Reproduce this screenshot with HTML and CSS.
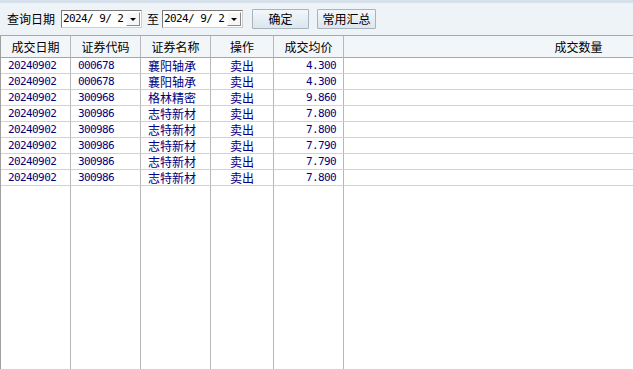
FILE: index.html
```html
<!DOCTYPE html>
<html lang="zh-CN">
<head>
    <meta charset="UTF-8">
    <title>成交查询</title>
    <link rel="stylesheet" href="styles.css">
</head>
<body>
    <div class="toolbar">
        <span class="label">查询日期</span>
        <div class="datebox"><span class="datetext">2024/ 9/ 2</span><span class="drop"></span></div>
        <span class="label to">至</span>
        <div class="datebox"><span class="datetext">2024/ 9/ 2</span><span class="drop"></span></div>
        <button class="btn btn-ok">确定</button>
        <button class="btn btn-sum">常用汇总</button>
    </div>

    <div class="grid">
        <table>
            <colgroup>
                <col class="c-date">
                <col class="c-code">
                <col class="c-name">
                <col class="c-op">
                <col class="c-price">
                <col class="c-qty">
            </colgroup>
            <thead>
                <tr>
                    <th>成交日期</th>
                    <th>证券代码</th>
                    <th>证券名称</th>
                    <th>操作</th>
                    <th>成交均价</th>
                    <th>成交数量</th>
                </tr>
            </thead>
            <tbody>
                <tr><td class="num">20240902</td><td class="num">000678</td><td>襄阳轴承</td><td class="op">卖出</td><td class="num price">4.300</td><td></td></tr>
                <tr><td class="num">20240902</td><td class="num">000678</td><td>襄阳轴承</td><td class="op">卖出</td><td class="num price">4.300</td><td></td></tr>
                <tr><td class="num">20240902</td><td class="num">300968</td><td>格林精密</td><td class="op">卖出</td><td class="num price">9.860</td><td></td></tr>
                <tr><td class="num">20240902</td><td class="num">300986</td><td>志特新材</td><td class="op">卖出</td><td class="num price">7.800</td><td></td></tr>
                <tr><td class="num">20240902</td><td class="num">300986</td><td>志特新材</td><td class="op">卖出</td><td class="num price">7.800</td><td></td></tr>
                <tr><td class="num">20240902</td><td class="num">300986</td><td>志特新材</td><td class="op">卖出</td><td class="num price">7.790</td><td></td></tr>
                <tr><td class="num">20240902</td><td class="num">300986</td><td>志特新材</td><td class="op">卖出</td><td class="num price">7.790</td><td></td></tr>
                <tr><td class="num">20240902</td><td class="num">300986</td><td>志特新材</td><td class="op">卖出</td><td class="num price">7.800</td><td></td></tr>
                <tr class="filler"><td></td><td></td><td></td><td></td><td></td><td></td></tr>
            </tbody>
        </table>
    </div>
</body>
</html>
```

FILE: styles.css
```css
body {
    margin: 0;
    width: 633px;
    height: 369px;
    overflow: hidden;
    background: #ffffff;
    font-family: "Noto Sans CJK SC", sans-serif;
    font-size: 12px;
    color: #000;
}

.toolbar {
    box-sizing: border-box;
    height: 36px;
    display: flex;
    align-items: center;
    padding-left: 7px;
    background: #eef3f8;
    border-top: 3px solid #d7e1eb;
    border-bottom: 1px solid #a7a7a7;
}
.label {
    line-height: 14px;
    margin-right: 6px;
}
.label.to {
    margin-left: 5px;
    margin-right: 3px;
}
.datebox {
    box-sizing: border-box;
    width: 81px;
    height: 18px;
    display: flex;
    align-items: center;
    justify-content: space-between;
    background: #fff;
    border: 1px solid;
    border-color: #7a7a7a #cfcfcf #cfcfcf #7a7a7a;
    padding: 0 1px 0 1px;
}
.datetext {
    font-family: "DejaVu Sans Mono", monospace;
    font-size: 11px;
    letter-spacing: -0.6px;
    line-height: 14px;
}
.drop {
    box-sizing: border-box;
    width: 14px;
    height: 14px;
    background: #f6f6f6;
    border: 1px solid;
    border-color: #ffffff #8a8a8a #8a8a8a #ffffff;
    display: flex;
    align-items: center;
    justify-content: center;
}
.drop::after {
    content: "";
    border-left: 3px solid transparent;
    border-right: 3px solid transparent;
    border-top: 3px solid #000;
    margin-top: 1px;
}

.btn {
    box-sizing: border-box;
    height: 20px;
    padding: 0;
    font-family: "Noto Sans CJK SC", sans-serif;
    font-size: 12px;
    line-height: 16px;
    color: #000;
    background: linear-gradient(to bottom, #f2f7fb, #dbe6ef);
    border: 1px solid #a9b3bc;
    border-radius: 1px;
}
.btn-ok {
    width: 57px;
    margin-left: 9px;
}
.btn-sum {
    width: 59px;
    margin-left: 8px;
}

.grid {
    width: 633px;
    height: 333px;
    overflow: hidden;
}
.grid table {
    width: 814px;
    table-layout: fixed;
    border-collapse: separate;
    border-spacing: 0;
    border-left: 1px solid #a0a0a0;
}
.c-date { width: 70px; }
.c-code { width: 70px; }
.c-name { width: 70px; }
.c-op { width: 63px; }
.c-price { width: 70px; }
.c-qty { width: 470px; }

th {
    box-sizing: border-box;
    height: 22px;
    padding: 0;
    font-weight: normal;
    line-height: 18px;
    background: #f3f6f9;
    border-right: 1px solid #b7b7b7;
    border-bottom: 1px solid #a7a7a7;
    white-space: nowrap;
    overflow: hidden;
}
td {
    box-sizing: border-box;
    height: 16px;
    padding: 0 7px;
    line-height: 14px;
    color: #000080;
    border-right: 1px solid #b7b7b7;
    border-bottom: 1px solid #d2d2d2;
    white-space: nowrap;
    overflow: hidden;
}
td.num {
    font-family: "DejaVu Sans Mono", monospace;
    font-size: 11px;
    letter-spacing: -0.6px;
}
td.price {
    text-align: right;
}
td.op {
    text-align: center;
    padding: 0;
}
.filler td {
    height: 183px;
    border-bottom: none;
}
```
